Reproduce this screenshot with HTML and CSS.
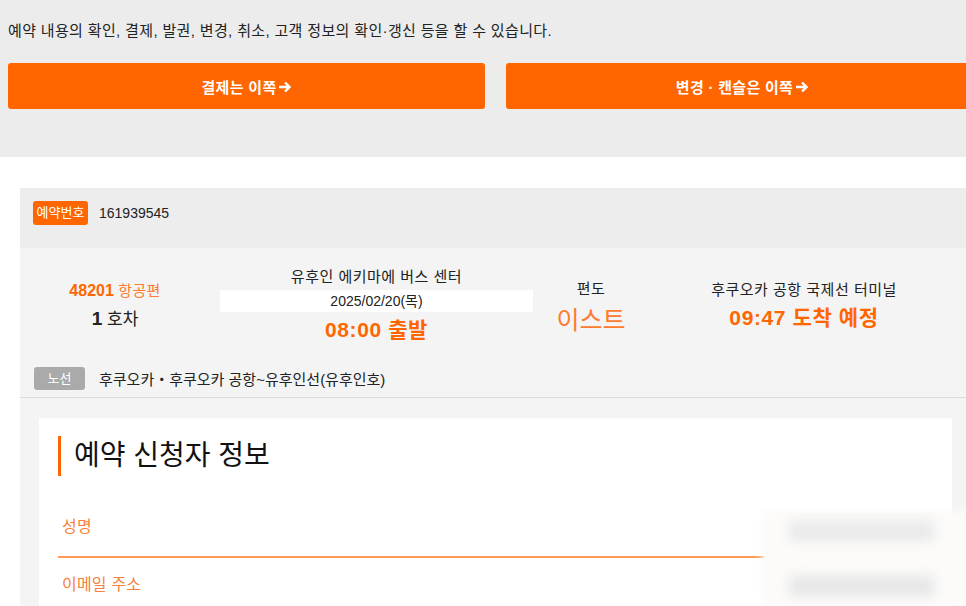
FILE: index.html
```html
<!DOCTYPE html>
<html lang="ko">

<head>
    <meta charset="UTF-8">
    <meta name="viewport" content="width=device-width, initial-scale=1.0">
    <title>예약 확인</title>
    <link rel="stylesheet" href="styles.css">
</head>

<body>

    <!-- Intro + action buttons -->
    <div class="intro">
        <p class="intro-text">예약 내용의 확인, 결제, 발권, 변경, 취소, 고객 정보의 확인·갱신 등을 할 수 있습니다.</p>
        <div class="btn-row">
            <a class="btn-orange" href="#">결제는 이쪽
                <svg class="arrow" width="13" height="12" viewBox="0 0 13 12"><path d="M1 6H11M7 1.5L11.5 6L7 10.5" fill="none" stroke="#fff" stroke-width="2.4"/></svg>
            </a>
            <a class="btn-orange" href="#">변경 · 캔슬은 이쪽
                <svg class="arrow" width="13" height="12" viewBox="0 0 13 12"><path d="M1 6H11M7 1.5L11.5 6L7 10.5" fill="none" stroke="#fff" stroke-width="2.4"/></svg>
            </a>
        </div>
    </div>

    <!-- Reservation card -->
    <div class="card">
        <div class="card-head">
            <span class="badge badge-orange">예약번호</span>
            <span class="resv-no">161939545</span>
        </div>

        <div class="card-body">
            <div class="trip-grid">
                <div class="trip-col">
                    <div class="flight"><b>48201</b> 항공편</div>
                    <div class="car"><b>1</b> 호차</div>
                </div>
                <div class="trip-col">
                    <div class="place">유후인 에키마에 버스 센터</div>
                    <div class="date-band">2025/02/20(목)</div>
                    <div class="time">08:00 출발</div>
                </div>
                <div class="trip-col trip-way">
                    <div class="place">편도</div>
                    <div class="direction">이스트</div>
                </div>
                <div class="trip-col">
                    <div class="place">후쿠오카 공항 국제선 터미널</div>
                    <div class="time">09:47 도착 예정</div>
                </div>
            </div>

            <div class="route">
                <span class="badge badge-gray">노선</span>
                <span class="route-name">후쿠오카・후쿠오카 공항~유후인선(유후인호)</span>
            </div>
        </div>

        <div class="card-foot">
            <div class="form-box">
                <h2 class="form-title">예약 신청자 정보</h2>
                <div class="form-row">
                    <span class="form-label">성명</span>
                </div>
                <div class="form-row">
                    <span class="form-label">이메일 주소</span>
                </div>

                <!-- blurred personal data -->
                <div class="blur-mask">
                    <div class="blur-bar"></div>
                    <div class="blur-bar blur-bar-2"></div>
                </div>
            </div>
        </div>
    </div>

</body>

</html>
```

FILE: styles.css
```css
body {
    margin: 0;
    overflow: hidden;
    font-family: "Liberation Sans", "Noto Sans CJK KR", sans-serif;
    color: #222;
    background-color: #fff;
}

/* Top area */
.intro {
    width: 986px;
    box-sizing: border-box;
    padding: 19px 8px 48px;
    background-color: #ececec;
}

.intro-text {
    margin: 0;
    font-size: 15px;
    letter-spacing: 0.35px;
    line-height: 24px;
    color: #222;
}

.btn-row {
    display: grid;
    grid-template-columns: 477px 472px;
    gap: 21px;
    margin-top: 20px;
}

.btn-orange {
    display: flex;
    align-items: center;
    justify-content: center;
    gap: 2px;
    height: 46px;
    border-radius: 3px;
    background-color: #ff6600;
    color: #fff;
    font-weight: bold;
    font-size: 15px;
    letter-spacing: 0.3px;
    text-decoration: none;
}

.arrow {
    margin-top: 1px;
}

/* Card */
.card {
    width: 951px;
    margin: 31px 0 0 20px;
}

.card-head {
    display: flex;
    align-items: flex-start;
    height: 47px;
    padding: 13px 0 0 13px;
    background-color: #ededed;
}

.badge {
    display: inline-block;
    border-radius: 3px;
    color: #fff;
    font-size: 13px;
    line-height: 24px;
    text-align: center;
}

.badge-orange {
    width: 55px;
    background-color: #ff6600;
}

.badge-gray {
    width: 51px;
    line-height: 23px;
    background-color: #aaa;
}

.resv-no {
    margin-left: 11px;
    font-size: 14px;
    line-height: 24px;
}

.card-body {
    padding: 19px 0 7px;
    background-color: #f4f4f4;
    border-bottom: 1px solid #dcdcdc;
}

.trip-grid {
    display: grid;
    grid-template-columns: 190px 333px 96px 330px;
    align-items: center;
}

.trip-col {
    padding: 0 10px;
    text-align: center;
}

.trip-way {
    padding-top: 4px;
}

.flight {
    color: #ff7a2e;
    font-size: 15px;
    letter-spacing: 0.3px;
    line-height: 28px;
}

.flight b {
    font-size: 16px;
    letter-spacing: 0;
    color: #ff6600;
}

.car {
    font-size: 17px;
    line-height: 28px;
}

.car b {
    font-size: 19px;
}

.place {
    font-size: 15px;
    letter-spacing: 0.5px;
    line-height: 20px;
}

.date-band {
    margin-top: 3px;
    background-color: #fff;
    font-size: 14px;
    line-height: 22px;
}

.time {
    margin-top: 4px;
    color: #ff6600;
    font-weight: bold;
    font-size: 21px;
    letter-spacing: 0.6px;
    line-height: 28px;
}

.direction {
    margin-top: 4px;
    color: #ff7a2e;
    font-size: 25px;
    line-height: 34px;
}

.route {
    display: flex;
    align-items: center;
    margin-top: 23px;
    padding-left: 14px;
}

.route-name {
    margin-left: 14px;
    font-size: 15px;
}

/* Applicant info */
.card-foot {
    padding: 20px 19px 0;
    background-color: #f4f4f4;
}

.form-box {
    position: relative;
    padding: 18px 19px 40px;
    background-color: #fff;
}

.form-title {
    margin: 0 0 25px;
    padding-left: 13px;
    border-left: 3px solid #ff6600;
    font-size: 28px;
    font-weight: normal;
    line-height: 40px;
    color: #111;
}

.form-row {
    padding: 15px 4px 18px;
    border-bottom: 2px solid #ff9a55;
    line-height: 22px;
}

.form-row + .form-row {
    padding-top: 16px;
}

.form-label {
    color: #f7813a;
    font-size: 16px;
    letter-spacing: 0.2px;
}

.blur-mask {
    position: absolute;
    left: 725px;
    top: 95px;
    width: 205px;
    height: 92px;
    padding: 8px 0 0 25px;
    box-sizing: border-box;
    background-color: #fcfbfa;
    box-shadow: 0 0 8px 2px #fcfbfa;
}

.blur-bar {
    width: 145px;
    height: 20px;
    background-color: #e9e9e9;
    filter: blur(6px);
}

.blur-bar-2 {
    margin-top: 35px;
    background-color: #e6e6e6;
}
```
